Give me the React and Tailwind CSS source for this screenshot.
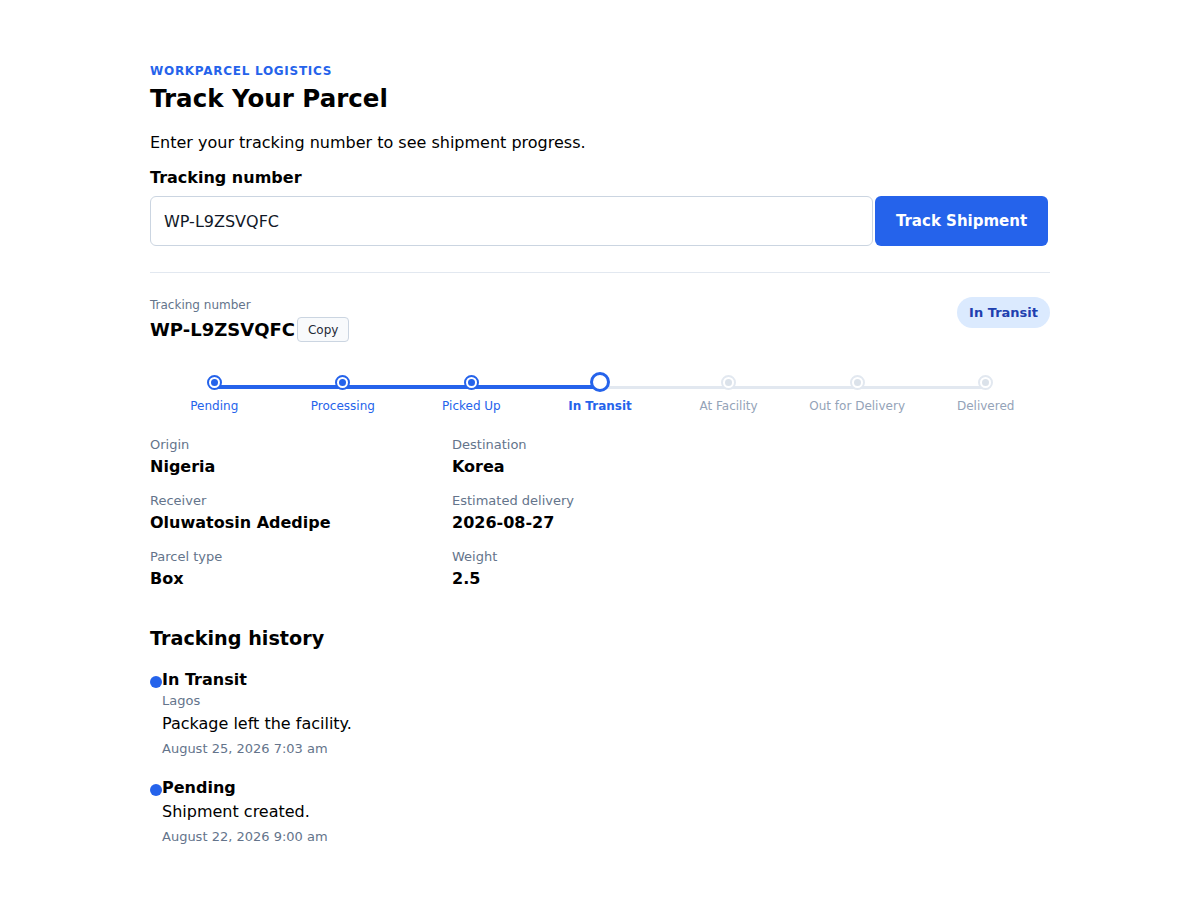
import React from "react";

const steps = [
  "Pending",
  "Processing",
  "Picked Up",
  "In Transit",
  "At Facility",
  "Out for Delivery",
  "Delivered",
];
const current = 3;

const details = [
  ["Origin", "Nigeria", "Destination", "Korea"],
  ["Receiver", "Oluwatosin Adedipe", "Estimated delivery", "2026-08-27"],
  ["Parcel type", "Box", "Weight", "2.5"],
];

const history = [
  { status: "In Transit", location: "Lagos", note: "Package left the facility.", date: "August 25, 2026 7:03 am" },
  { status: "Pending", location: null, note: "Shipment created.", date: "August 22, 2026 9:00 am" },
];

const StepDot = ({ state }) => {
  if (state === "current") {
    return <div className="w-5 h-5 rounded-full border-[3px] border-[#2563eb] bg-white" />;
  }
  if (state === "done") {
    return (
      <div className="w-[15px] h-[15px] rounded-full border-2 border-[#2563eb] bg-white flex items-center justify-center">
        <div className="w-[7px] h-[7px] rounded-full bg-[#2563eb]" />
      </div>
    );
  }
  return (
    <div className="w-[15px] h-[15px] rounded-full border-2 border-[#e2e8f0] bg-white flex items-center justify-center">
      <div className="w-[7px] h-[7px] rounded-full bg-[#dbe2ea]" />
    </div>
  );
};

const Stepper = () => (
  <div className="relative mt-[28px]">
    <div className="absolute left-[64px] right-[64px] top-[16px] h-[3px] bg-[#e2e8f0]" />
    <div className="absolute left-[64px] w-[386px] top-[15px] h-[4px] bg-[#2563eb]" />
    <div className="relative grid grid-cols-7">
      {steps.map((s, i) => {
        const state = i < current ? "done" : i === current ? "current" : "todo";
        return (
          <div key={s} className="flex flex-col items-center">
            <div className="h-5 mt-[2px] flex items-center justify-center">
              <StepDot state={state} />
            </div>
            <div
              className={`mt-[6px] text-[12px] leading-4 ${
                state === "current"
                  ? "font-bold text-[#2563eb]"
                  : state === "done"
                  ? "text-[#2563eb]"
                  : "text-[#94a3b8]"
              }`}
            >
              {s}
            </div>
          </div>
        );
      })}
    </div>
  </div>
);

export default function App() {
  return (
    <div className="min-h-screen bg-white text-black font-['DejaVu_Sans',sans-serif]">
      <div className="w-[900px] mx-auto pt-[63px] pb-16">
        <div className="text-[12px] leading-4 font-bold tracking-[0.06em] text-[#2563eb]">WORKPARCEL LOGISTICS</div>
        <h1 className="mt-[4px] text-[24.5px] leading-8 font-bold">Track Your Parcel</h1>
        <p className="mt-[16px] text-[16px] leading-6">Enter your tracking number to see shipment progress.</p>
        <label className="block mt-[11px] text-[16px] leading-6 font-bold">Tracking number</label>
        <div className="mt-[6px] flex gap-[2px] w-[898px]">
          <input
            readOnly
            value="WP-L9ZSVQFC"
            className="flex-1 h-[50px] px-[13px] rounded-[6px] border border-[#cbd5e1] text-[16px] text-[#111827] outline-none font-['DejaVu_Sans',sans-serif]"
          />
          <button className="w-[173px] h-[50px] rounded-[6px] bg-[#2563eb] text-white text-[15px] font-bold">
            Track Shipment
          </button>
        </div>

        <div className="mt-[26px] border-t border-[#e2e8f0]" />

        <div className="mt-6 flex justify-between items-start">
          <div>
            <div className="text-[12px] leading-4 text-[#64748b]">Tracking number</div>
            <div className="mt-[4px] flex items-center">
              <span className="text-[18px] leading-6 font-bold">WP-L9ZSVQFC</span>
              <button className="ml-[2px] h-[25px] px-[10px] rounded-[4px] border border-[#cbd5e1] bg-[#f8fafc] text-[12px] text-[#1f2937]">
                Copy
              </button>
            </div>
          </div>
          <span className="h-[31px] px-[12px] rounded-full bg-[#dbeafe] text-[#1e40af] text-[13px] font-bold flex items-center">
            In Transit
          </span>
        </div>

        <Stepper />

        <div className="mt-[22px] flex flex-col gap-[14px]">
          {details.map(([l1, v1, l2, v2]) => (
            <div key={l1} className="grid grid-cols-[302px_1fr]">
              <div>
                <div className="text-[13px] leading-[18px] text-[#64748b]">{l1}</div>
                <div className="mt-[2px] text-[16px] leading-[22px] font-bold">{v1}</div>
              </div>
              <div>
                <div className="text-[13px] leading-[18px] text-[#64748b]">{l2}</div>
                <div className="mt-[2px] text-[16px] leading-[22px] font-bold">{v2}</div>
              </div>
            </div>
          ))}
        </div>

        <h2 className="mt-[35px] text-[19.2px] leading-7 font-bold">Tracking history</h2>
        <div className="mt-[15px] flex flex-col gap-[18px]">
          {history.map((h) => (
            <div key={h.date}>
              <div className="flex items-center">
                <span className="w-3 h-3 mt-[3px] rounded-full bg-[#2563eb]" />
                <span className="text-[16px] leading-6 font-bold">{h.status}</span>
              </div>
              <div className="pl-3">
                {h.location && <div className="text-[13px] leading-[18px] text-[#64748b]">{h.location}</div>}
                <div className={`${h.location ? "mt-[2px]" : ""} text-[16px] leading-6`}>{h.note}</div>
                <div className="mt-[4px] text-[13px] leading-[18px] text-[#64748b]">{h.date}</div>
              </div>
            </div>
          ))}
        </div>
      </div>
    </div>
  );
}
